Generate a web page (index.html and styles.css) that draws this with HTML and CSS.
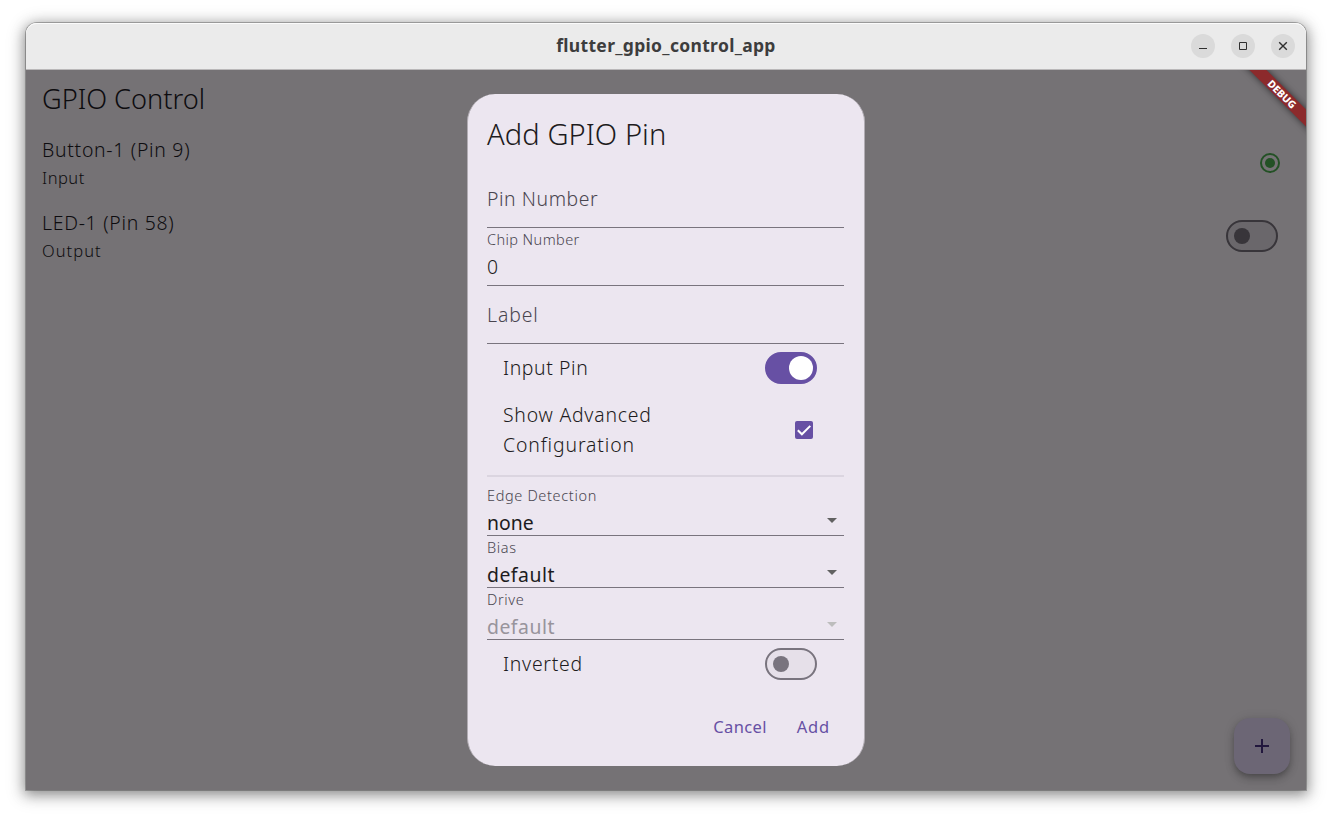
FILE: index.html
```html
<!DOCTYPE html>
<html lang="en">
<head>
<meta charset="utf-8">
<title>flutter_gpio_control_app</title>
<link rel="stylesheet" href="styles.css">
</head>
<body>
<div class="window">
  <header class="titlebar">
    <span class="titlebar-spacer"></span>
    <h1 class="titlebar-title">flutter_gpio_control_app</h1>
    <div class="controls">
      <button class="control" aria-label="Minimize"><svg width="24" height="24"><path d="M8 14.5h8"/></svg></button>
      <button class="control" aria-label="Maximize"><svg width="24" height="24"><path d="M8.5 8.5h7v7h-7z"/></svg></button>
      <button class="control" aria-label="Close"><svg width="24" height="24"><path class="thick" d="M8.2 8.2l7.6 7.6M15.8 8.2l-7.6 7.6"/></svg></button>
    </div>
  </header>
  <main class="app">
    <h2 class="appbar">GPIO Control</h2>
    <ul class="pins">
      <li class="pin">
        <div><div class="pin-name">Button-1 (Pin 9)</div><div class="pin-kind kind-input">Input</div></div>
        <svg class="pin-state" width="20" height="20"><circle class="ring" cx="10" cy="10" r="9"/><circle class="dot" cx="10" cy="10" r="5"/></svg>
      </li>
      <li class="pin">
        <div><div class="pin-name">LED-1 (Pin 58)</div><div class="pin-kind kind-output">Output</div></div>
        <span class="switch dimmed"></span>
      </li>
    </ul>
    <button class="fab" aria-label="Add"><svg width="14" height="14"><path d="M7 0v14M0 7h14"/></svg></button>
    <div class="banner"><span>DEBUG</span></div>

    <section class="dialog">
      <h2 class="dialog-title">Add GPIO Pin</h2>
      <div class="field"><span class="placeholder">Pin Number</span></div>
      <div class="field filled"><span class="caption caption-chip">Chip Number</span><span class="value">0</span></div>
      <div class="field"><span class="placeholder label-field">Label</span></div>
      <div class="tile"><span>Input Pin</span><span class="switch on"></span></div>
      <div class="tile tall"><span>Show Advanced<br><span class="wide">Configuration</span></span>
        <svg class="checkbox" width="18" height="18"><rect width="18" height="18" rx="2"/><path d="M2.8 9.2l4.1 4.1 8.4-8.4"/></svg></div>
      <div class="divider"></div>
      <div class="select"><span class="caption">Edge Detection</span><span class="choice none">none</span><svg class="arrow" width="10" height="5"><path d="M0 0h10l-5 5z"/></svg></div>
      <div class="select"><span class="caption">Bias</span><span class="choice">default</span><svg class="arrow" width="10" height="5"><path d="M0 0h10l-5 5z"/></svg></div>
      <div class="select disabled"><span class="caption">Drive</span><span class="choice">default</span><svg class="arrow" width="10" height="5"><path d="M0 0h10l-5 5z"/></svg></div>
      <div class="tile"><span class="inverted">Inverted</span><span class="switch"></span></div>
      <div class="actions"><button class="cancel">Cancel</button><button class="add">Add</button></div>
    </section>
  </main>
</div>
</body>
</html>
```
FILE: styles.css
```css
* { box-sizing: border-box; }
body {
  margin: 0;
  padding: 23px 26px 29px;
  background: #fff;
  font-family: "Noto Sans", sans-serif;
  font-weight: 300;
  overflow: hidden;
}
h1, h2, ul { margin: 0; padding: 0; font-weight: inherit; }
button { border: 0; padding: 0; font: inherit; }
svg { display: block; }

.window {
  width: 1280px;
  height: 767px;
  border-radius: 11px 11px 0 0;
  box-shadow: 0 3px 13px 1px rgba(0, 0, 0, .4), 0 3px 18px 5px rgba(0, 0, 0, .12), 0 0 0 1px rgba(0, 0, 0, .25);
}
.titlebar {
  display: grid;
  grid-template-columns: 104px 1fr 104px;
  align-items: center;
  height: 47px;
  padding: 0 11px;
  background: #ebebeb;
  border-bottom: 1px solid #bab8b9;
  border-radius: 11px 11px 0 0;
  box-shadow: inset 0 1px #fbfbfb;
}
.titlebar-title {
  padding-bottom: 2px;
  text-align: center;
  font-size: 17.5px;
  line-height: 24px;
  font-weight: 700;
  letter-spacing: .32px;
  color: #3d3d3d;
}
.controls { display: flex; gap: 16px; }
.control { width: 24px; height: 24px; border-radius: 50%; background: #dadada; }
.control path { fill: none; stroke: #2f2f2f; }
.control .thick { stroke-width: 1.4; }

.app {
  position: relative;
  height: 720px;
  background: #757275;
  color: #0d0c0f;
  overflow: hidden;
}
.appbar {
  height: 56px;
  padding: 1px 16px 0;
  font-size: 27.2px;
  line-height: 56px;
  letter-spacing: 0;
}
.pins { list-style: none; }
.pin {
  display: flex;
  justify-content: space-between;
  align-items: center;
  height: 73px;
  padding: 1px 28px 0 16px;
}
.pin-state { margin-right: -2px; }
.pin-state .ring { fill: none; stroke: #235125; stroke-width: 2; }
.pin-state .dot { fill: #235125; }
.pin-name { font-size: 19.4px; line-height: 30px; letter-spacing: .72px; }
.pin-kind { font-size: 16.5px; line-height: 26px; letter-spacing: .5px; }
.kind-output { letter-spacing: 1.05px; }

.switch {
  flex: none;
  display: flex;
  align-items: center;
  width: 52px;
  height: 32px;
  padding-left: 6px;
  border: 2px solid #79747e;
  border-radius: 16px;
  background: #e6e0e9;
}
.switch::before {
  content: "";
  width: 16px;
  height: 16px;
  border-radius: 50%;
  background: #79747e;
}
.switch.on { padding-left: 22px; border-color: #6750a4; background: #6750a4; }
.switch.on::before { width: 24px; height: 24px; background: #fff; }
.switch.dimmed { border-color: #38353a; background: #6a676b; }
.switch.dimmed::before { background: #38353a; }

.fab {
  position: absolute;
  right: 16px;
  bottom: 16px;
  display: grid;
  place-items: center;
  width: 56px;
  height: 56px;
  border-radius: 16px;
  background: #6c6675;
  box-shadow: 0 3px 5px -1px rgba(0, 0, 0, .2), 0 6px 10px rgba(0, 0, 0, .14), 0 1px 12px rgba(0, 0, 0, .12);
}
.fab path { stroke: #22173d; stroke-width: 2; }

.banner {
  position: absolute;
  top: 18px;
  right: -36px;
  width: 120px;
  height: 12px;
  transform: rotate(45deg);
  background: #8c2a2c;
  box-shadow: 0 0 7px rgba(0, 0, 0, .6);
  color: #fff;
  font-size: 10.3px;
  line-height: 12px;
  font-weight: 800;
  text-align: center;
}

.dialog {
  position: absolute;
  top: 24px;
  left: 441px;
  width: 398px;
  height: 672px;
  padding: 16px 20px 0 19px;
  border: solid #b1acb3;
  border-width: 0 1px;
  border-radius: 28px;
  background: #ece6f0;
  color: #1d1b20;
}
.dialog-title {
  height: 60px;
  font-size: 29.1px;
  line-height: 49px;
  letter-spacing: .07px;
}
.field { height: 58px; border-bottom: 1px solid #79747e; }
.placeholder {
  display: block;
  color: #49454f;
  font-size: 19.4px;
  line-height: 58px;
  letter-spacing: .57px;
}
.label-field { letter-spacing: .9px; }
.caption {
  display: block;
  color: #49454f;
  font-size: 14.5px;
  line-height: 22px;
  letter-spacing: .65px;
}
.caption-chip { letter-spacing: .42px; }
.value { display: block; margin-top: 2px; font-size: 19.4px; line-height: 30px; }

.tile {
  display: flex;
  justify-content: space-between;
  align-items: center;
  height: 48px;
  padding: 0 27px 0 16px;
  font-size: 19.4px;
  line-height: 30px;
  letter-spacing: .6px;
}
.tile.tall { height: 76px; padding-right: 31px; letter-spacing: .78px; }
.tile .wide { letter-spacing: .88px; }
.tile .inverted { letter-spacing: .74px; }
.checkbox rect { fill: #6750a4; }
.checkbox path { fill: none; stroke: #fff; stroke-width: 2; }
.divider { height: 2px; margin: 7px 0; background: #dbd5e0; }

.select {
  display: grid;
  grid-template-columns: 1fr 10px;
  grid-template-rows: 24px 27px;
  height: 52px;
  padding-right: 7px;
  border-bottom: 1px solid #79747e;
}
.select .caption { grid-column: 1 / 3; }
.choice { font-size: 19.4px; line-height: 29px; font-weight: 400; letter-spacing: .5px; }
.choice.none { letter-spacing: 0; }
.arrow { margin-top: 10px; }
.arrow path { fill: #616161; }
.disabled .choice { color: #98949c; }
.disabled .arrow path { fill: #bdbdbd; }

.actions { display: flex; justify-content: flex-end; gap: 30px; padding: 26px 14px 0 0; }
.actions button {
  background: none;
  color: #6750a4;
  font-size: 16.5px;
  line-height: 26px;
  font-weight: 400;
}
.cancel { letter-spacing: .35px; }
.add { letter-spacing: .8px; }
```
